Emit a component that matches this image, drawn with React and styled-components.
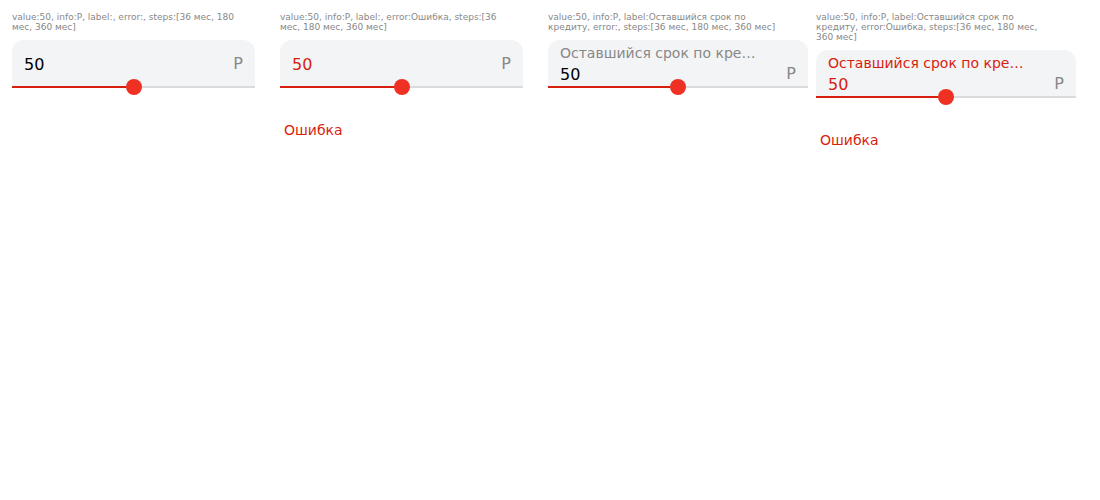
import React, { useId, useState } from "react";
import styled, { createGlobalStyle } from "styled-components";

const GlobalStyle = createGlobalStyle`
  *, *::before, *::after { box-sizing: border-box; }
  body {
    margin: 0;
    background: #fff;
    color: #000;
    font-family: "DejaVu Sans", Verdana, sans-serif;
  }
`;

const Gallery = styled.main`
  display: grid;
  grid-template-columns: repeat(4, minmax(0, 1fr));
  align-items: start;
  gap: 8px;
  padding: 12px 24px 12px 12px;
`;

const Example = styled.section`
  padding-right: ${({ $compact }) => ($compact ? "17px" : "0")};
`;

const Caption = styled.p`
  max-width: 236px;
  margin: 0 0 8px;
  color: #888;
  font-size: 9px;
  line-height: 10px;
`;

const Field = styled.div`
  position: relative;
  display: flex;
  flex-direction: column;
  justify-content: center;
  height: 48px;
  padding: 0 12px;
  border-radius: 12px 12px 0 0;
  background: #f3f4f6;
`;

const Label = styled.label`
  padding-right: 34px;
  overflow: hidden;
  color: ${({ $invalid }) => ($invalid ? "#d81e0e" : "#888")};
  font-size: 14px;
  line-height: 20px;
  text-overflow: ellipsis;
  white-space: nowrap;
`;

const ValueRow = styled.div`
  display: flex;
  align-items: center;
  gap: 12px;
  height: 22px;
`;

const ValueInput = styled.input`
  flex: 1;
  min-width: 0;
  height: 22px;
  padding: 1px 0 0;
  border: 0;
  outline: 0;
  background: transparent;
  color: ${({ $invalid }) => ($invalid ? "#d81e0e" : "#000")};
  font: 16px/20px "DejaVu Sans", Verdana, sans-serif;
`;

const Info = styled.span`
  color: #888;
  font-size: 16px;
  line-height: 20px;
`;

const Slider = styled.input`
  position: absolute;
  right: 0;
  bottom: -7px;
  left: 0;
  width: 100%;
  height: 16px;
  margin: 0;
  appearance: none;
  background: linear-gradient(#d81e0e, #d81e0e) left center / var(--filled) 2px no-repeat,
    linear-gradient(#dbdbdb, #dbdbdb) center / 100% 2px no-repeat;
  cursor: pointer;

  &::-webkit-slider-thumb {
    appearance: none;
    width: 16px;
    height: 16px;
    border: 0;
    border-radius: 50%;
    background: #ef3124;
  }

  &::-moz-range-thumb {
    width: 16px;
    height: 16px;
    border: 0;
    border-radius: 50%;
    background: #ef3124;
  }
`;

const ErrorText = styled.p`
  margin: 32px 4px 0;
  color: #d81e0e;
  font-size: 14px;
  line-height: 20px;
`;

const STEPS = ["36 мес", "180 мес", "360 мес"];
const LABEL = "Оставшийся срок по кредиту";
const ERROR = "Ошибка";

const EXAMPLES = [
  { label: "", error: "" },
  { label: "", error: ERROR },
  { label: LABEL, error: "" },
  { label: LABEL, error: ERROR },
];

function SliderInput({ label, error, info }) {
  const id = useId();
  const [value, setValue] = useState("50");
  const invalid = Boolean(error);
  const filled = Math.min(100, Math.max(0, Number(value) || 0));
  const change = (event) => setValue(event.target.value);

  return (
    <>
      <Field>
        {label && <Label htmlFor={id} $invalid={invalid}>{label}</Label>}
        <ValueRow>
          <ValueInput
            id={id}
            type="text"
            inputMode="numeric"
            aria-label={label ? undefined : "Значение"}
            aria-invalid={invalid}
            aria-describedby={error ? `${id}-error` : undefined}
            value={value}
            onChange={change}
            $invalid={invalid}
          />
          <Info>{info}</Info>
        </ValueRow>
        <Slider
          type="range"
          min="0"
          max="100"
          aria-label={label || "Значение"}
          value={filled}
          onChange={change}
          style={{ "--filled": `${filled}%` }}
        />
      </Field>
      {error && <ErrorText id={`${id}-error`}>{error}</ErrorText>}
    </>
  );
}

export default function App() {
  return (
    <>
      <GlobalStyle />
      <Gallery>
        {EXAMPLES.map(({ label, error }, index) => (
          <Example key={index} $compact={!label}>
            <Caption>
              {`value:50, info:Р, label:${label}, error:${error}, steps:[${STEPS.join(", ")}]`}
            </Caption>
            <SliderInput label={label} error={error} info="Р" />
          </Example>
        ))}
      </Gallery>
    </>
  );
}
